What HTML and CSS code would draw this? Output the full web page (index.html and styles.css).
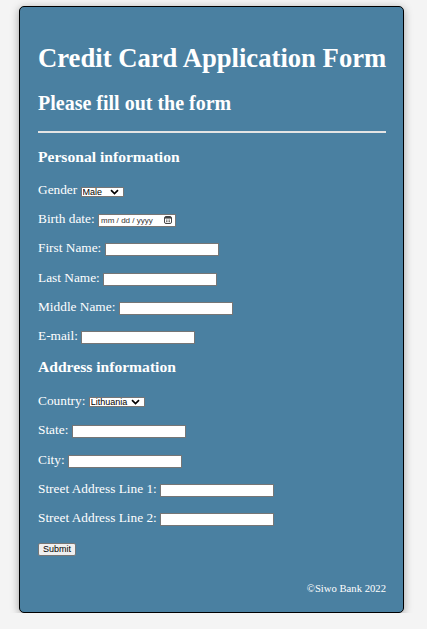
FILE: index.html
```html
<!DOCTYPE html>
<html lang="en">
<head>
<meta charset="utf-8">
<title>Credit Card Application Form</title>
<link rel="stylesheet" href="styles.css">
</head>
<body>
<div class="card">
  <h1 class="title">Credit Card Application Form</h1>
  <h2 class="subtitle">Please fill out the form</h2>
  <hr class="rule">
  <form class="form">
    <h3 class="section section-first">Personal information</h3>
    <p class="row">Gender <span class="select-box select-gender"><select class="select-native"><option>Male</option><option>Female</option></select><svg class="chev" width="9" height="6" viewBox="0 0 9 6"><path d="M1 1.2 L4.5 4.6 L8 1.2" stroke="#000" stroke-width="1.7" fill="none"/></svg></span></p>
    <p class="row">Birth date: <span class="date-box"><input class="date-native" type="date"><svg class="cal" width="8" height="8" viewBox="0 0 8 8"><rect x="0.5" y="0.5" width="7" height="7" rx="1.5" fill="none" stroke="#444" stroke-width="1"/><rect x="1" y="1" width="6" height="1.6" fill="#444"/><rect x="2" y="3.6" width="1" height="1" fill="#555"/><rect x="3.5" y="3.6" width="1" height="1" fill="#555"/><rect x="5" y="3.6" width="1" height="1" fill="#555"/><rect x="2" y="5.2" width="1" height="1" fill="#555"/><rect x="3.5" y="5.2" width="1" height="1" fill="#555"/><rect x="5" y="5.2" width="1" height="1" fill="#555"/></svg></span></p>
    <p class="row">First Name: <input class="ctl text" type="text"></p>
    <p class="row">Last Name: <input class="ctl text" type="text"></p>
    <p class="row">Middle Name: <input class="ctl text" type="text"></p>
    <p class="row">E-mail: <input class="ctl text" type="email"></p>
    <h3 class="section section-second">Address information</h3>
    <p class="row">Country: <span class="select-box select-country"><select class="select-native"><option>Lithuania</option><option>Latvia</option><option>Estonia</option></select><svg class="chev" width="9" height="6" viewBox="0 0 9 6"><path d="M1 1.2 L4.5 4.6 L8 1.2" stroke="#000" stroke-width="1.7" fill="none"/></svg></span></p>
    <p class="row">State: <input class="ctl text" type="text"></p>
    <p class="row">City: <input class="ctl text" type="text"></p>
    <p class="row">Street Address Line 1: <input class="ctl text" type="text"></p>
    <p class="row">Street Address Line 2: <input class="ctl text" type="text"></p>
    <p class="row row-last"><button class="ctl submit" type="submit">Submit</button></p>
  </form>
  <p class="footer">©Siwo Bank 2022</p>
</div>
</body>
</html>
```
FILE: styles.css
```css
html, body {
  margin: 0;
  padding: 0;
  background: #f4f4f4;
}
body {
  padding: 6px 0 0 19px;
  font-family: "Liberation Serif", "Times New Roman", serif;
  color: #ffffff;
}
.card {
  box-sizing: border-box;
  width: 385px;
  height: 607px;
  background: #4a80a1;
  border: 1px solid #000;
  border-radius: 5px;
  box-shadow: 0 2px 8px rgba(0, 0, 0, 0.35);
  padding: 0 17px 0 18px;
  display: flow-root;
}
.title {
  margin: 35px 0 0;
  font-size: 26.67px;
  line-height: 32px;
  font-weight: bold;
  white-space: nowrap;
}
.subtitle {
  margin: 18px 0 0;
  font-size: 20px;
  line-height: 22px;
  font-weight: bold;
}
.rule {
  margin: 17px 0 0;
  height: 0;
  border: 0;
  border-top: 2px solid #e4e4e4;
}
.form {
  margin: 0;
}
.section {
  margin: 0;
  font-size: 15.6px;
  line-height: 18px;
  font-weight: bold;
}
.section-first {
  margin-top: 15.3px;
  margin-bottom: 15.3px;
}
.section-second {
  margin-top: 1px;
  margin-bottom: 17.4px;
}
.row {
  margin: 0 0 13.35px;
  height: 16px;
  font-size: 13.33px;
  line-height: 16px;
  white-space: nowrap;
}
.row-last {
  margin-bottom: 0;
}
.ctl {
  vertical-align: top;
  box-sizing: border-box;
  font-family: "Liberation Sans", Arial, sans-serif;
  font-size: 9px;
  margin: 3px 0 0;
  color: #000;
}
.text {
  width: 114px;
  height: 13px;
  padding: 0 2px;
  border: 1px solid #767676;
  background: #fff;
  border-radius: 0;
}

/* select */
.select-box {
  display: inline-flex;
  align-items: center;
  box-sizing: border-box;
  height: 10px;
  margin-top: 5px;
  vertical-align: top;
  border: 1px solid #767676;
  background: #fff;
  padding: 0 4px 0 1px;
}
.select-gender {
  width: 43px;
}
.select-country {
  width: 56px;
  margin-top: 4px;
}
.select-native {
  appearance: none;
  -webkit-appearance: none;
  flex: 1;
  min-width: 0;
  width: 0;
  height: 8px;
  margin: 0;
  padding: 0;
  border: 0;
  background: transparent;
  font-family: "Liberation Sans", Arial, sans-serif;
  font-size: 9px;
  line-height: 8px;
  color: #000;
  overflow: visible;
}
.chev {
  display: block;
  flex: none;
}

/* date */
.date-box {
  display: inline-flex;
  align-items: center;
  box-sizing: border-box;
  width: 78px;
  height: 13px;
  margin-top: 3px;
  vertical-align: top;
  border: 1px solid #767676;
  background: #fff;
  padding: 0 3px 0 1px;
}
.date-native {
  flex: 1;
  min-width: 0;
  width: 0;
  height: 11px;
  margin: 0;
  padding: 0;
  border: 0;
  background: transparent;
  font-family: "Liberation Sans", Arial, sans-serif;
  font-size: 8px;
  line-height: 11px;
  color: #333;
}
.date-native::-webkit-calendar-picker-indicator {
  display: none;
}
.date-native::-webkit-datetime-edit {
  padding: 0;
}
.date-native::-webkit-datetime-edit-fields-wrapper {
  padding: 0;
}
.date-native::-webkit-datetime-edit-text {
  padding: 0 1.3px;
}
.cal {
  display: block;
  flex: none;
}

.submit {
  width: 38px;
  height: 13px;
  padding: 0;
  border: 1px solid #767676;
  background: #efefef;
  border-radius: 2px;
  line-height: 10px;
}
.footer {
  margin: 25.8px 0 0;
  text-align: right;
  font-size: 10.67px;
  line-height: 13px;
}
```
